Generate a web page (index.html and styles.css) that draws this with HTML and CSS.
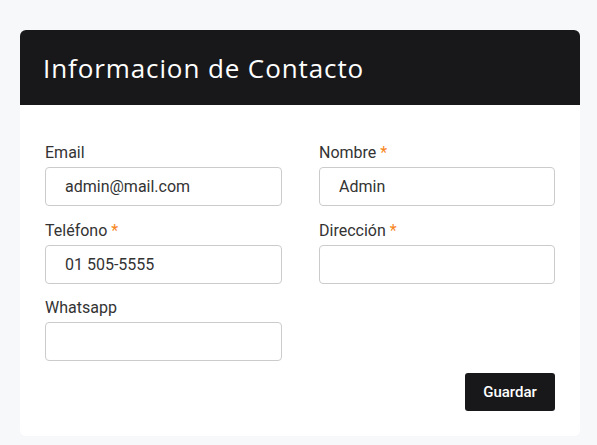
FILE: index.html
```html
<!DOCTYPE html>
<html lang="es">
<head>
<meta charset="utf-8">
<link rel="stylesheet" href="styles.css">
</head>
<body>
<div class="page">
  <section class="card">
    <header class="card-header">
      <h1 class="card-title">Informacion de Contacto</h1>
    </header>
    <form class="card-body">
      <div class="grid">
        <div class="field">
          <label class="label">Email</label>
          <input class="input" type="text" value="admin@mail.com">
        </div>
        <div class="field">
          <label class="label">Nombre <span class="req">*</span></label>
          <input class="input" type="text" value="Admin">
        </div>
        <div class="field">
          <label class="label">Teléfono <span class="req">*</span></label>
          <input class="input" type="text" value="01 505-5555">
        </div>
        <div class="field">
          <label class="label">Dirección <span class="req">*</span></label>
          <input class="input" type="text" value="">
        </div>
        <div class="field">
          <label class="label">Whatsapp</label>
          <input class="input" type="text" value="">
        </div>
      </div>
      <div class="actions">
        <button class="btn" type="button">Guardar</button>
      </div>
    </form>
  </section>
</div>
</body>
</html>
```

FILE: styles.css
```css
* { box-sizing: border-box; }
html, body { margin: 0; padding: 0; }
body {
  background: #f7f8fa;
  font-family: Roboto, "Liberation Sans", sans-serif;
  color: #333;
}
.page {
  padding: 30px 17px 0 20px;
}
.card {
  background: #fff;
  border-radius: 6px;
  overflow: hidden;
  width: 560px;
}
.card-header {
  background: #18181b;
  height: 75px;
  display: flex;
  align-items: center;
  padding: 0 23px;
}
.card-title {
  margin: 0;
  color: #fff;
  font-family: "Open Sans", sans-serif;
  font-weight: 400;
  font-size: 26px;
  letter-spacing: 0.9px;
}
.card-body {
  padding: 37px 25px 25px 25px;
}
.grid {
  display: grid;
  grid-template-columns: 237px 236px;
  column-gap: 37px;
  row-gap: 13.5px;
}
.field {
  display: flex;
  flex-direction: column;
}
.label {
  font-size: 16px;
  line-height: 22px;
  margin-bottom: 3px;
  color: #333;
}
.req { color: #f7861c; }
.input {
  height: 39px;
  border: 1px solid #cbcbcb;
  border-radius: 4px;
  padding: 0 19px;
  font-family: Roboto, "Liberation Sans", sans-serif;
  font-size: 16px;
  color: #333;
  background: #fff;
  outline: none;
}
.actions {
  display: flex;
  justify-content: flex-end;
  margin-top: 12px;
}
.btn {
  width: 90px;
  height: 38px;
  background: #18181b;
  color: #fff;
  border: none;
  border-radius: 3px;
  font-family: Roboto, "Liberation Sans", sans-serif;
  font-weight: 500;
  font-size: 15px;
}
```
